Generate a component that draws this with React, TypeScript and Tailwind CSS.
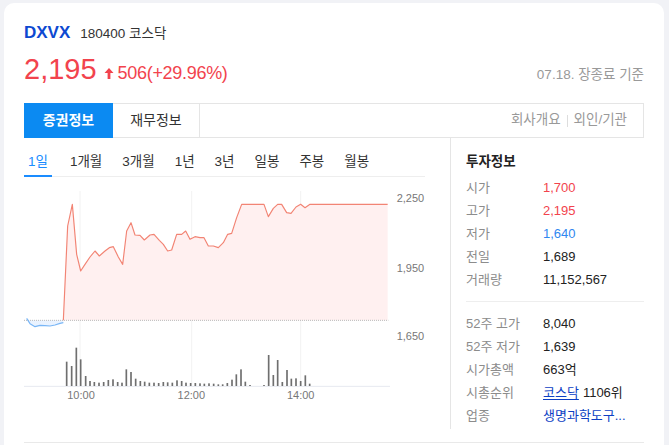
import React from "react";

// chart coords: viewBox units = page px * 3, origin at page (24,180)
const BLUE_LINE: [number, number][] = [
  [80, 412], [90, 428], [105, 437], [120, 433], [135, 434], [150, 435], [165, 432], [180, 427], [190, 425],
];

const RED_LINE: [number, number][] = [
  [190, 418], [203, 135], [217, 70], [230, 220], [242, 270], [255, 250], [270, 228], [285, 210],
  [298, 225], [315, 210], [328, 200], [340, 197], [355, 228], [368, 250], [380, 150], [393, 125],
  [405, 162], [420, 163], [433, 177], [450, 162], [462, 160], [478, 178], [490, 190], [503, 210],
  [515, 207], [530, 160], [545, 160], [557, 150], [570, 175], [585, 167], [600, 170], [612, 170],
  [625, 195], [640, 195], [655, 200], [670, 185], [683, 160], [695, 157], [710, 110], [725, 70],
  [792, 70], [805, 107], [820, 82], [833, 70], [845, 70], [860, 95], [873, 97], [888, 78],
  [902, 70], [915, 80], [930, 70], [1163, 70],
];

const VOLUME: [number, number][] = [
  [200, 122], [215, 135], [229, 80], [242, 115], [257, 165], [270, 180], [283, 183], [297, 185],
  [311, 183], [325, 177], [339, 175], [353, 183], [366, 185], [379, 145], [393, 153], [407, 173],
  [421, 180], [434, 182], [448, 185], [462, 185], [476, 186], [490, 183], [503, 184], [517, 185],
  [531, 178], [545, 180], [558, 185], [572, 186], [586, 186], [600, 187], [613, 188], [627, 187],
  [641, 188], [655, 190], [668, 190], [682, 186], [696, 176], [709, 160], [723, 145], [736, 182],
  [750, 192], [792, 192], [806, 102], [820, 162], [833, 117], [847, 183], [861, 147], [874, 173],
  [888, 172], [902, 180], [916, 163], [929, 188],
];

const BASE = 418;
const toPts = (pts: [number, number][]) => pts.map(([x, y]) => `${x},${y}`).join(" ");

function PriceChart() {
  const redFill = toPts([...RED_LINE, [1163, BASE], [190, BASE]]);
  const blueFill = toPts([[80, BASE], ...BLUE_LINE, [190, BASE]]);
  return (
    <svg width="406" height="225" viewBox="72 0 1218 675" className="mt-[4px] block">
      {[240, 575, 902].map((x) => (
        <line key={x} x1={x} y1={30} x2={x} y2={615} stroke="#f2f2f2" strokeWidth={3} />
      ))}
      <polygon points={redFill} fill="#fff0f0" />
      <polygon points={blueFill} fill="#eaf3ff" />
      <line x1={72} y1={BASE} x2={1165} y2={BASE} stroke="#b9b9b9" strokeWidth={3} strokeDasharray="3 3" />
      <polyline points={toPts(RED_LINE)} fill="none" stroke="#f28474" strokeWidth={3.5} strokeLinejoin="round" />
      <polyline points={toPts(BLUE_LINE)} fill="none" stroke="#79b6f6" strokeWidth={3.5} strokeLinejoin="round" />
      <line x1={72} y1={616} x2={1170} y2={616} stroke="#e6e9f0" strokeWidth={3} />
      {VOLUME.map(([x, top]) => (
        <rect key={x} x={x - 2.5} y={top + 420} width={5} height={615 - (top + 420)} fill="#6f6f6f" />
      ))}
      <g fill="#777" fontSize={33}>
        <text x={1190} y={64}>2,250</text>
        <text x={1190} y={272}>1,950</text>
        <text x={1190} y={477}>1,650</text>
        <text x={243} y={654} textAnchor="middle">10:00</text>
        <text x={574} y={654} textAnchor="middle">12:00</text>
        <text x={902} y={654} textAnchor="middle">14:00</text>
      </g>
    </svg>
  );
}

const periods = ["1일", "1개월", "3개월", "1년", "3년", "일봉", "주봉", "월봉"];

const quote = [
  { label: "시가", value: "1,700", color: "text-[#f2434d]" },
  { label: "고가", value: "2,195", color: "text-[#f2434d]" },
  { label: "저가", value: "1,640", color: "text-[#2f87f0]" },
  { label: "전일", value: "1,689", color: "text-[#222]" },
  { label: "거래량", value: "11,152,567", color: "text-[#222]" },
];

function Row({ label, children }: { label: string; children: React.ReactNode }) {
  return (
    <div className="flex h-[23px] items-center text-[13px] leading-[23px]">
      <span className="w-[77px] shrink-0 text-[#8c8c8c]">{label}</span>
      {children}
    </div>
  );
}

export default function App() {
  return (
    <div className="min-h-[445px] bg-[#f1f2f6] pl-[4px] pr-[5px] pt-[3px] font-['Liberation_Sans','Noto_Sans_CJK_KR',sans-serif] text-[#222]">
      <div className="rounded-t-[10px] bg-white px-5 pb-10 pt-5">
        <div className="flex items-baseline leading-[20px]">
          <span className="text-[17px] font-bold text-[#0d49d1]">DXVX</span>
          <span className="ml-[10px] text-[13.5px] text-[#333]">180400 코스닥</span>
        </div>

        <div className="mt-[8px] flex items-baseline justify-between leading-[34px]">
          <div className="flex items-baseline text-[#f2434d]">
            <span className="text-[29px]">2,195</span>
            <svg width="10" height="12" viewBox="0 0 10 12" className="ml-[7px]">
              <path d="M5 1 L9.5 6 H6.4 V12 H3.6 V6 H0.5 Z" fill="#f2434d" />
            </svg>
            <span className="ml-[4px] text-[18px] tracking-[-0.3px]">506(+29.96%)</span>
          </div>
          <span className="text-[13.5px] text-[#999]">07.18. 장종료 기준</span>
        </div>

        <div className="mt-[11px] flex h-[35px] items-center border border-[#e5e5e5] text-[14px]">
          <div className="-my-px -ml-px flex h-[35px] w-[89px] items-center justify-center bg-[#0b8af2] font-semibold text-white">
            증권정보
          </div>
          <div className="flex h-full w-[87px] items-center justify-center border-r border-[#e5e5e5] text-[#333]">
            재무정보
          </div>
          <div className="ml-auto flex items-center pr-[16px] text-[13.5px] text-[#999]">
            <span>회사개요</span>
            <span className="mx-[6px] h-[12px] w-px bg-[#ddd]" />
            <span>외인/기관</span>
          </div>
        </div>

        <div className="flex">
          <div className="w-[426px] shrink-0">
            <div className="flex w-[401px] gap-[20px] border-b border-[#eee] pt-[14px] text-[13.5px] leading-[20px] text-[#333]">
              {periods.map((p, i) => (
                <span
                  key={p}
                  className={
                    i === 0
                      ? "-mb-px -mr-[2px] border-b-2 border-[#1a8cff] px-[4px] pb-[3px] text-[#1a8cff]"
                      : "-mb-px border-b-2 border-transparent pb-[3px]"
                  }
                >
                  {p}
                </span>
              ))}
            </div>
            <PriceChart />
          </div>

          <div className="flex-1 border-l border-[#e5e5e5] pb-[2px] pl-[15px]">
            <div className="pt-[14px] text-[13.5px] font-bold leading-[20px] text-[#222]">투자정보</div>
            <div className="mt-[4px] border-b border-[#eee] pb-[10px]">
              {quote.map((q) => (
                <Row key={q.label} label={q.label}>
                  <span className={q.color}>{q.value}</span>
                </Row>
              ))}
            </div>
            <div className="pt-[10px]">
              <Row label="52주 고가">
                <span>8,040</span>
              </Row>
              <Row label="52주 저가">
                <span>1,639</span>
              </Row>
              <Row label="시가총액">
                <span>663억</span>
              </Row>
              <Row label="시총순위">
                <span className="text-[#0d3fc4] underline underline-offset-2">코스닥</span>
                <span className="ml-[4px]">1106위</span>
              </Row>
              <Row label="업종">
                <span className="whitespace-nowrap text-[#0d3fc4]">생명과학도구...</span>
              </Row>
            </div>
          </div>
        </div>
        <div className="mt-[13px] border-b border-[#e9e9e9]" />
      </div>
    </div>
  );
}
